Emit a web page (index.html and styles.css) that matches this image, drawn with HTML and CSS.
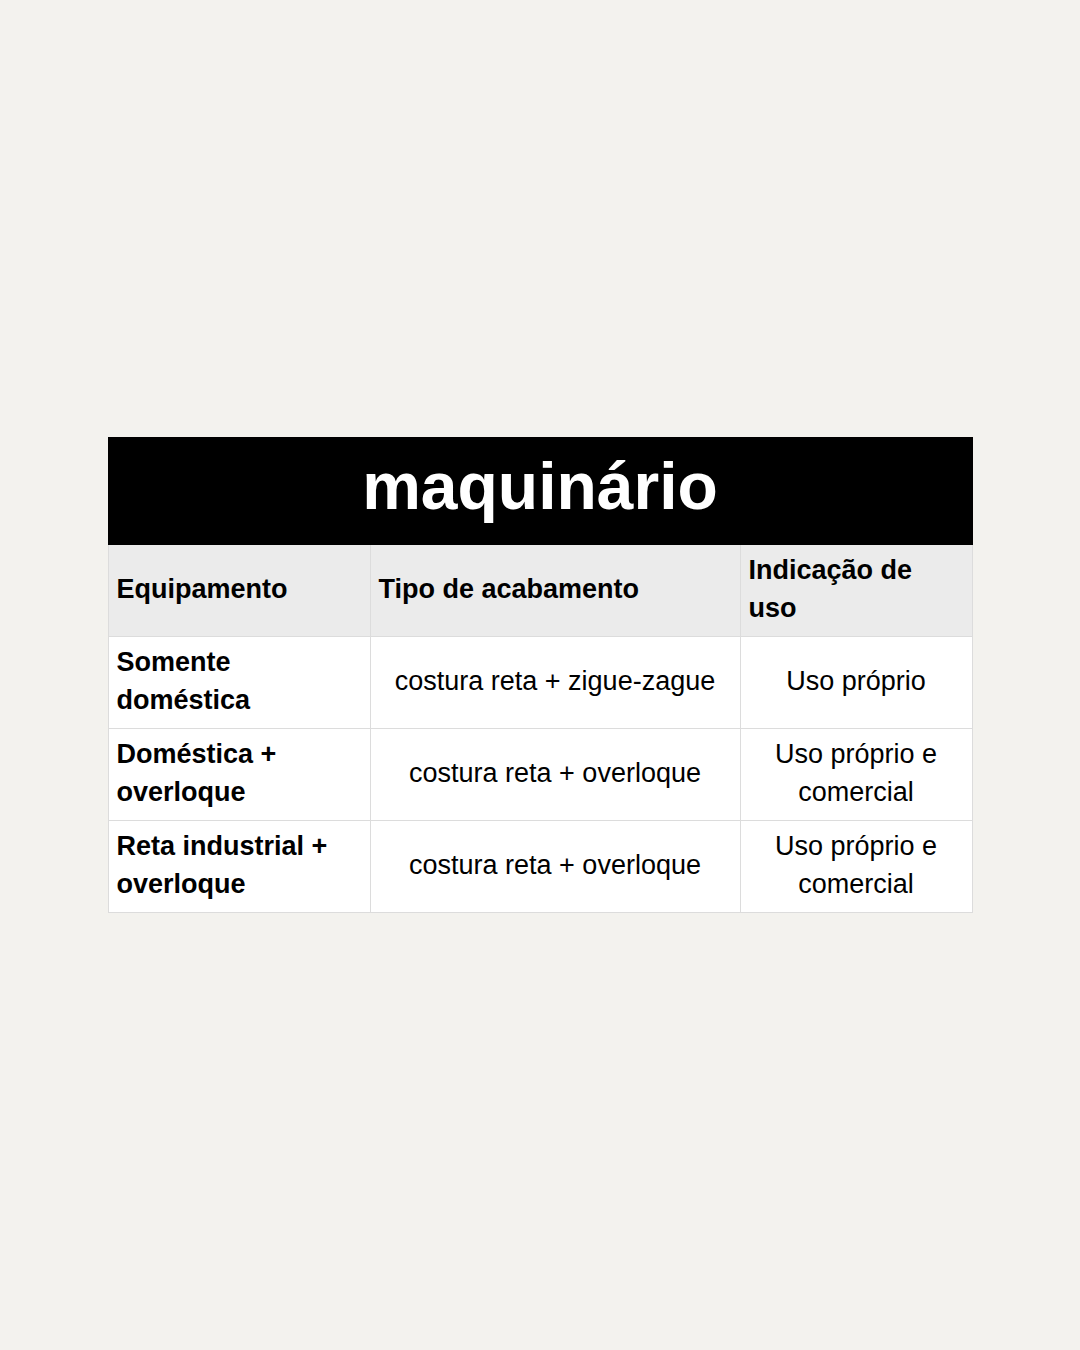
FILE: index.html
```html
<!DOCTYPE html>
<html lang="pt">
<head>
<meta charset="utf-8">
<link rel="stylesheet" href="styles.css">
</head>
<body>
<main class="page">
  <table class="machines">
    <colgroup>
      <col class="c1">
      <col class="c2">
      <col class="c3">
    </colgroup>
    <thead>
      <tr class="title-row"><th colspan="3" class="title">maquinário</th></tr>
      <tr class="head-row">
        <th>Equipamento</th>
        <th>Tipo de acabamento</th>
        <th>Indicação de uso</th>
      </tr>
    </thead>
    <tbody>
      <tr>
        <th class="eq">Somente doméstica</th>
        <td>costura reta + zigue-zague</td>
        <td>Uso próprio</td>
      </tr>
      <tr>
        <th class="eq">Doméstica + overloque</th>
        <td>costura reta + overloque</td>
        <td>Uso próprio e comercial</td>
      </tr>
      <tr>
        <th class="eq">Reta industrial + overloque</th>
        <td>costura reta + overloque</td>
        <td>Uso próprio e comercial</td>
      </tr>
    </tbody>
  </table>
</main>
</body>
</html>
```
FILE: styles.css
```css
html, body {
  margin: 0;
  padding: 0;
}
body {
  background: #f3f2ee;
  font-family: "Liberation Sans", Arial, Helvetica, sans-serif;
  color: #000;
}
.page {
  min-height: 1350px;
  display: flex;
  align-items: center;
  justify-content: center;
}
.machines {
  width: 864px;
  table-layout: fixed;
  border-collapse: collapse;
  background: #fff;
  font-size: 27px;
  line-height: 38px;
}
.c1 { width: 262px; }
.c2 { width: 370px; }
.c3 { width: 232px; }
.machines th, .machines td {
  border: 1px solid #dcdcdc;
  padding: 0 8px 3px;
  height: 88px;
  vertical-align: middle;
}
.title-row .title {
  background: #000;
  color: #fff;
  border-color: #000;
  height: 96px;
  font-size: 66px;
  line-height: 1;
  font-weight: 700;
  text-align: center;
  padding: 0 0 10px;
}
.head-row th {
  background: #ebebeb;
  font-weight: 700;
  text-align: left;
}
.eq {
  font-weight: 700;
  text-align: left;
}
tbody td {
  text-align: center;
  font-weight: 400;
}
```
